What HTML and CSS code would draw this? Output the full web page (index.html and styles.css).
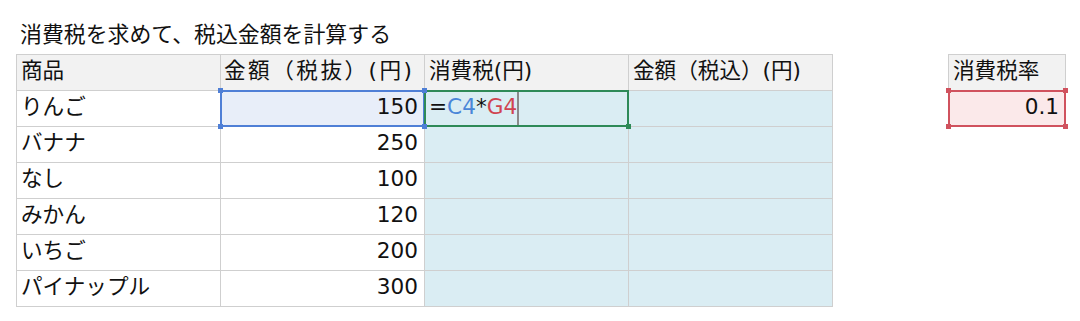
FILE: index.html
```html
<!DOCTYPE html>
<html lang="ja">
<head>
<meta charset="utf-8">
<link rel="stylesheet" href="styles.css">
</head>
<body>
<div class="page">
  <div class="title">消費税を求めて、税込金額を計算する</div>
  <div class="sheets">
    <div class="grid main">
      <div class="cell head">商品</div>
      <div class="cell head spread">金額（税抜）(円)</div>
      <div class="cell head">消費税(円)</div>
      <div class="cell head">金額（税込）(円)</div>

      <div class="cell">りんご</div>
      <div class="cell num sel-blue">150<i class="h tl"></i><i class="h bl"></i><i class="h tr"></i><i class="h br"></i></div>
      <div class="cell fill sel-green"><span class="eq">=</span><span class="ref-b">C4</span><span class="eq">*</span><span class="ref-r">G4</span><span class="caret"></span><i class="h br g"></i></div>
      <div class="cell fill"></div>

      <div class="cell">バナナ</div>
      <div class="cell num">250</div>
      <div class="cell fill"></div>
      <div class="cell fill"></div>

      <div class="cell">なし</div>
      <div class="cell num">100</div>
      <div class="cell fill"></div>
      <div class="cell fill"></div>

      <div class="cell">みかん</div>
      <div class="cell num">120</div>
      <div class="cell fill"></div>
      <div class="cell fill"></div>

      <div class="cell">いちご</div>
      <div class="cell num">200</div>
      <div class="cell fill"></div>
      <div class="cell fill"></div>

      <div class="cell">パイナップル</div>
      <div class="cell num">300</div>
      <div class="cell fill"></div>
      <div class="cell fill"></div>
    </div>

    <div class="grid rate">
      <div class="cell head">消費税率</div>
      <div class="cell num sel-red">0.1<i class="h tl r"></i><i class="h bl r"></i><i class="h tr r"></i><i class="h br r"></i></div>
    </div>
  </div>
</div>
</body>
</html>
```

FILE: styles.css
```css
* { box-sizing: border-box; }
html, body { margin: 0; padding: 0; background: #ffffff; }
body {
  font-family: "DejaVu Sans", "Noto Sans CJK JP", sans-serif;
  color: #111111;
  width: 1080px;
  height: 321px;
  overflow: hidden;
}
.page {
  padding: 20px 0 0 16px;
}
.title {
  font-size: 21.9px;
  line-height: 30px;
  height: 34px;
  padding-left: 4px;
}
.sheets {
  display: flex;
  align-items: flex-start;
  gap: 115px;
}
.grid {
  display: grid;
  gap: 1px;
  padding: 1px;
  background: #cfcfcf;
  grid-auto-rows: 35px;
}
.main { grid-template-columns: repeat(4, 203px); }
.rate { grid-template-columns: 116px; }
.cell {
  position: relative;
  background: #ffffff;
  font-size: 21.6px;
  line-height: 32px;
  padding: 0 6px 0 4px;
  white-space: nowrap;
}
.head { background: #f2f2f2; }
.spread { letter-spacing: 2.5px; padding-left: 3px; }
.num { text-align: right; }
.fill { background: #daedf3; }

.sel-blue { background: #e8eef9; }
.sel-blue::after {
  content: "";
  position: absolute;
  inset: -1px;
  border: 2px solid #4f7fd6;
}
.sel-green::after {
  content: "";
  position: absolute;
  inset: -1px;
  border: 2px solid #2e8a57;
}
.sel-red { background: #fbe9ea; }
.sel-red::after {
  content: "";
  position: absolute;
  inset: -1px;
  border: 2px solid #d0525e;
}
.h {
  position: absolute;
  width: 5px;
  height: 5px;
  background: #4f7fd6;
  z-index: 2;
}
.h.g { background: #2e8a57; }
.h.r { background: #d0525e; }
.tl { left: -3px; top: -3px; }
.tr { right: -3px; top: -3px; }
.bl { left: -3px; bottom: -3px; }
.br { right: -3px; bottom: -3px; }

.eq { color: #111111; }
.ref-b { color: #4a86d8; }
.ref-r { color: #d04350; }
.caret {
  position: absolute;
  top: 0;
  bottom: 0;
  left: 92px;
  width: 2px;
  background: #8a8a8a;
}
```
